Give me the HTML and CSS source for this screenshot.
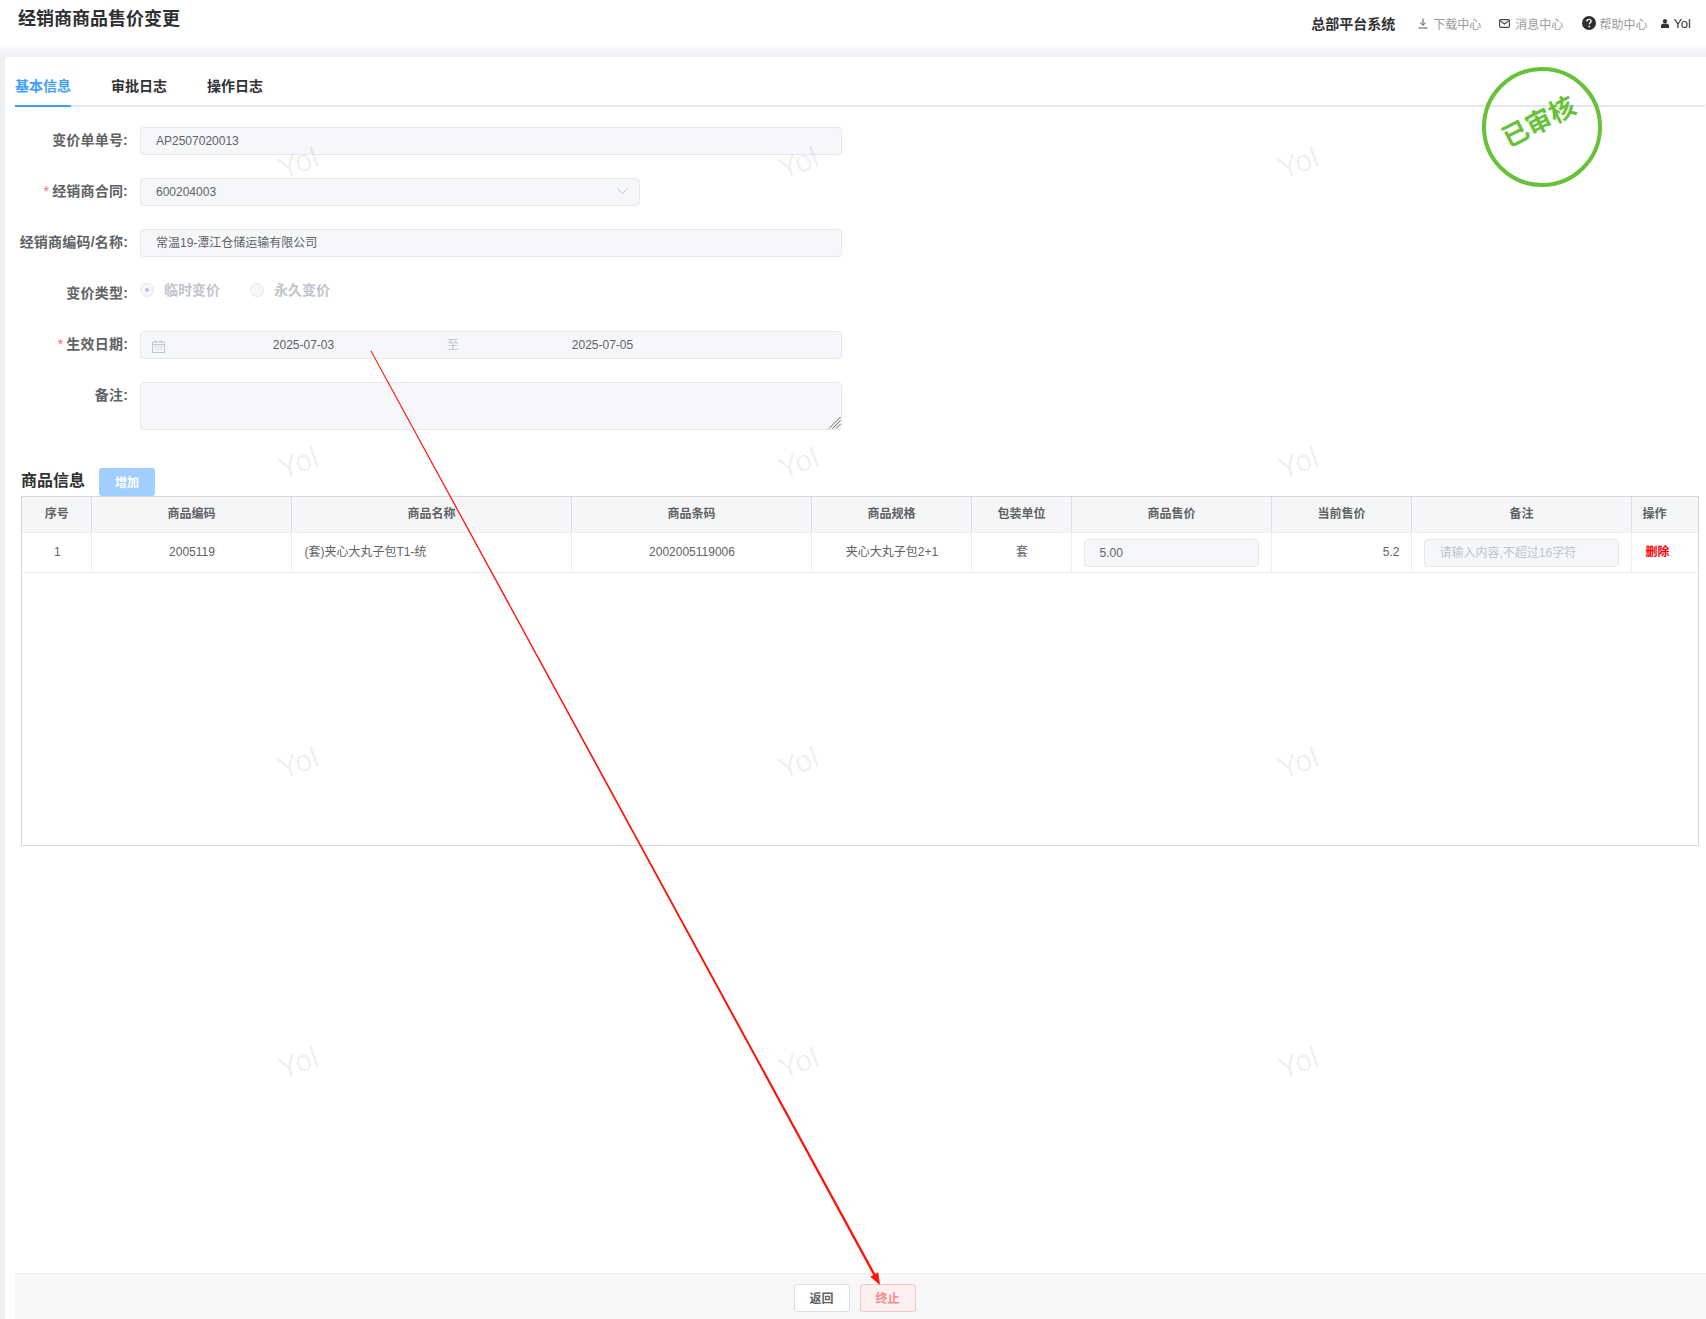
FILE: index.html
```html
<!DOCTYPE html>
<html lang="zh-CN">
<head>
<meta charset="utf-8">
<title>经销商商品售价变更</title>
<link rel="stylesheet" href="styles.css">
</head>
<body>
<div class="page">
  <header class="topbar">
    <h1 class="title">经销商商品售价变更</h1>
    <nav class="topnav">
      <span class="system">总部平台系统</span>
      <a class="navlink nav-download"><svg class="ic-download" viewBox="0 0 10 11"><path d="M5 .5v6.6M2.2 4.6 5 7.3l2.8-2.7M.5 10h9" fill="none" stroke="#555" stroke-width="1"/></svg><span>下载中心</span></a>
      <a class="navlink nav-mail"><svg class="ic-mail" viewBox="0 0 11 9"><rect x=".6" y=".6" width="9.8" height="7.8" rx="1.2" fill="none" stroke="#444" stroke-width="1.1"/><path d="M1 1.6 5.5 5 10 1.6" fill="none" stroke="#444" stroke-width="1.1"/></svg><span>消息中心</span></a>
      <a class="navlink nav-help"><svg class="ic-help" viewBox="0 0 14 14"><circle cx="7" cy="7" r="7" fill="#2f2f33"/><path d="M4.9 5.4c0-1.3 1-2 2.1-2 1.2 0 2.1.7 2.1 1.8 0 1.5-1.7 1.5-1.7 3" fill="none" stroke="#fff" stroke-width="1.4"/><circle cx="7.3" cy="10.4" r=".9" fill="#fff"/></svg><span>帮助中心</span></a>
      <a class="navlink nav-user"><svg class="ic-user" viewBox="0 0 8 9"><circle cx="4" cy="2.2" r="2.1" fill="#333"/><path d="M0 9V7c0-1.6 1.2-2.6 2.5-2.6h3C6.800 4.400 8 5.400 8 7v2z" fill="#333"/></svg><span class="user-name">Yol</span></a>
    </nav>
  </header>
  <div class="strip"></div>
  <main class="main">
    <div class="tabs">
      <span class="tab tab-active">基本信息</span>
      <span class="tab">审批日志</span>
      <span class="tab">操作日志</span>
    </div>

    <form class="form">
      <div class="row">
        <label class="label">变价单单号:</label>
        <div class="field wide">AP2507020013</div>
      </div>
      <div class="row">
        <label class="label"><i class="req">*</i>经销商合同:</label>
        <div class="field narrow select">
          <span>600204003</span>
          <svg class="chevron" viewBox="0 0 11 6"><path d="M.4.4 5.500 5.500 10.600.4" fill="none" stroke="#c0c4cc" stroke-width="1"/></svg>
        </div>
      </div>
      <div class="row">
        <label class="label">经销商编码/名称:</label>
        <div class="field wide">常温19-潭江仓储运输有限公司</div>
      </div>
      <div class="row">
        <label class="label">变价类型:</label>
        <div class="radios">
          <span class="radio radio-on"></span><span class="radio-text">临时变价</span>
          <span class="radio radio-second"></span><span class="radio-text">永久变价</span>
        </div>
      </div>
      <div class="row">
        <label class="label"><i class="req">*</i>生效日期:</label>
        <div class="field wide date">
          <svg class="ic-cal" viewBox="0 0 13 13"><path d="M.5 2h12v10.500H.5zM.5 4.600h12M3.500.4v2.600M9.500.4v2.600" fill="none" stroke="#c0c4cc" stroke-width="1"/><path d="M3 6.800h1.500M5.800 6.800h1.500M8.600 6.800h1.500M3 9.300h1.500M5.800 9.300h1.500M8.600 9.300h1.500" stroke="#c0c4cc" stroke-width="1"/></svg>
          <span class="date-val">2025-07-03</span>
          <span class="date-sep">至</span>
          <span class="date-val">2025-07-05</span>
        </div>
      </div>
      <div class="row row-last">
        <label class="label">备注:</label>
        <div class="memo-wrap">
          <textarea class="memo" disabled></textarea>
          <svg class="memo-grip" viewBox="0 0 13 13"><path d="M1 12.500 12.500 1M4.500 12.500l8-8M8 12.500l4.500-4.500" fill="none" stroke="#666" stroke-width="1"/></svg>
        </div>
      </div>
    </form>

    <section class="goods">
      <div class="goods-head">
        <h2 class="goods-title">商品信息</h2>
        <button class="btn-add" type="button">增加</button>
      </div>
      <div class="table-box">
        <table class="grid">
          <colgroup>
            <col class="c-69"><col class="c-200"><col class="c-280"><col class="c-240"><col class="c-160"><col class="c-100"><col class="c-200"><col class="c-140"><col class="c-220"><col>
          </colgroup>
          <thead>
            <tr>
              <th>序号</th><th>商品编码</th><th>商品名称</th><th>商品条码</th><th>商品规格</th><th>包装单位</th><th>商品售价</th><th>当前售价</th><th>备注</th><th class="th-op">操作</th>
            </tr>
          </thead>
          <tbody>
            <tr>
              <td>1</td>
              <td>2005119</td>
              <td class="t-left">(套)夹心大丸子包T1-统</td>
              <td>2002005119006</td>
              <td>夹心大丸子包2+1</td>
              <td>套</td>
              <td class="t-left t-field"><div class="field cell-field">5.00</div></td>
              <td class="t-right">5.2</td>
              <td class="t-left t-field"><div class="field cell-field placeholder">请输入内容,不超过16字符</div></td>
              <td class="td-op">删除</td>
            </tr>
          </tbody>
        </table>
      </div>
    </section>

    <footer class="actions">
      <button class="btn" type="button">返回</button>
      <button class="btn btn-danger" type="button">终止</button>
    </footer>

    <div class="stamp"><span class="stamp-text">已审核</span></div>
  </main>

  <div class="watermarks">
    <span>Yol</span><span>Yol</span><span>Yol</span>
    <span>Yol</span><span>Yol</span><span>Yol</span>
    <span>Yol</span><span>Yol</span><span>Yol</span>
    <span>Yol</span><span>Yol</span><span>Yol</span>
  </div>

  <svg class="arrow" viewBox="0 0 1706 1319"><polygon points="371.44,350.76 875.31,1273.93 878.21,1272.35 880,1285 870.31,1276.65 873.21,1275.07 370.56,351.24" fill="#ff1208"/></svg>
</div>
</body>
</html>
```
FILE: styles.css
```css
* { box-sizing: border-box; }
html, body { margin: 0; padding: 0; }
body {
  font-family: "Liberation Sans", "Noto Sans CJK SC", sans-serif;
  font-size: 12px;
  color: #606266;
  background: #fff;
}
.page {
  position: relative;
  width: 1706px;
  height: 1319px;
  overflow: hidden;
  display: flex;
  flex-direction: column;
}

/* top bar */
.topbar {
  height: 46px;
  flex: none;
  display: flex;
  justify-content: space-between;
  background: #fff;
}
.title {
  margin: 0;
  padding-left: 18px;
  font-size: 18px;
  line-height: 38px;
  font-weight: 600;
  color: #2f2f33;
}
.topnav {
  display: flex;
  align-items: center;
  height: 46px;
  padding: 1px 15px 0 0;
}
.system { font-size: 14px; font-weight: 700; color: #303133; margin-top: -2px; }
.navlink { display: flex; align-items: center; color: #999; }
.nav-download { margin-left: 23px; gap: 5px; }
.nav-mail { margin-left: 18px; gap: 5px; }
.nav-help { margin-left: 19px; gap: 3px; }
.nav-user { margin-left: 14px; gap: 4px; }
.ic-download { width: 10px; height: 11px; }
.ic-mail { width: 11px; height: 9px; }
.ic-help { width: 14px; height: 14px; margin-top: -2px; }
.ic-user { width: 8px; height: 9px; }
.user-name { color: #333; font-size: 13px; }

.strip {
  height: 11px;
  flex: none;
  background: linear-gradient(#f8f9fa, #eef0f4);
}

/* main panel */
.main {
  position: relative;
  flex: 1;
  display: flex;
  flex-direction: column;
  background: #fff;
  margin-left: 5px;
}
.page::before {
  content: "";
  position: absolute;
  left: 0;
  top: 57px;
  bottom: 0;
  width: 5px;
  background: #eef0f5;
}
.tabs {
  display: flex;
  gap: 40px;
  margin: 0 1px 0 10px;
  padding-top: 19px;
  border-bottom: 2px solid #e4e7ed;
  height: 50px;
}
.tab {
  height: 31px;
  font-size: 14px;
  line-height: 20px;
  font-weight: 700;
  color: #303133;
}
.tab-active { color: #409eff; border-bottom: 2px solid #409eff; }

/* form */
.form { margin: 20px 0 0 10px; }
.row { display: flex; gap: 12px; margin-bottom: 23px; }
.row-last { margin-bottom: 0; }
.label {
  width: 113px;
  flex: none;
  text-align: right;
  font-size: 14px;
  line-height: 27px;
  font-weight: 700;
  letter-spacing: 0.2px;
  color: #606266;
  white-space: nowrap;
}
.req { font-style: normal; font-weight: 400; color: #f56c6c; font-size: 14px; margin-right: 3px; }
.field {
  height: 28px;
  line-height: 26px;
  padding-left: 15px;
  background: #f5f7fa;
  border: 1px solid #e4e7ed;
  border-radius: 4px;
  color: #606266;
}
.wide { width: 702px; }
.narrow { width: 500px; }
.select { display: flex; align-items: center; justify-content: space-between; padding-right: 11px; }
.chevron { width: 11px; height: 6px; margin-top: -2px; }
.radios {
  display: flex;
  align-items: center;
  height: 20px;
  font-size: 14px;
  font-weight: 700;
  color: #c0c4cc;
  margin-bottom: 8px;
}
.radio-text { margin-top: -2px; }
.radio {
  width: 14px;
  height: 14px;
  flex: none;
  border-radius: 50%;
  background: #f5f7fa;
  border: 1px solid #e4e7ed;
  margin-right: 10px;
  display: flex;
  align-items: center;
  justify-content: center;
}
.radio-on::after {
  content: "";
  width: 4px;
  height: 4px;
  border-radius: 50%;
  background: #c0c4cc;
}
.radio-second { margin-left: 30px; }
.date { display: flex; align-items: center; padding-left: 11px; }
.ic-cal { width: 13px; height: 13px; flex: none; margin-top: 2px; }
.date-val { width: 277px; text-align: center; }
.date-sep { width: 22px; text-align: center; color: #c0c4cc; }
.memo-wrap { position: relative; width: 702px; height: 48px; }
.memo {
  display: block;
  width: 100%;
  height: 100%;
  margin: 0;
  background: #f5f7fa;
  border: 1px solid #e4e7ed;
  border-radius: 4px;
  resize: none;
  font: inherit;
}
.memo-grip {
  position: absolute;
  right: 1px;
  bottom: 1px;
  width: 13px;
  height: 13px;
}

/* goods table */
.goods { margin: 38px 7px 0 16px; }
.goods-head { display: flex; align-items: center; gap: 14px; height: 28px; }
.goods-title { margin: -2px 0 0; font-size: 16px; font-weight: 700; color: #303133; line-height: 24px; }
.btn-add {
  width: 56px;
  height: 28px;
  padding: 0 0 2px;
  border: 0;
  border-radius: 3px;
  background: #a0cfff;
  color: #fff;
  font: 700 12px "Liberation Sans", "Noto Sans CJK SC", sans-serif;
}
.table-box {
  height: 350px;
  border: 1px solid #d8d8d8;
}
.grid {
  width: 100%;
  table-layout: fixed;
  border-collapse: collapse;
}
.c-69 { width: 69px; }
.c-100 { width: 100px; }
.c-140 { width: 140px; }
.c-160 { width: 160px; }
.c-200 { width: 200px; }
.c-220 { width: 220px; }
.c-240 { width: 240px; }
.c-280 { width: 280px; }
.grid th {
  height: 35px;
  padding: 0 0 1px 1px;
  line-height: 16px;
  background: #f5f6f8;
  border-right: 1px solid #dcdfe6;
  border-bottom: 1px solid #ebeef5;
  font-weight: 700;
  color: #606266;
  text-align: center;
}
.grid th:last-child { border-right: 0; }
.grid td {
  height: 40px;
  padding: 0 11px 0 13px;
  line-height: 16px;
  border-right: 1px solid #ebeef5;
  border-bottom: 1px solid #ebeef5;
  text-align: center;
  color: #606266;
}
.grid td:last-child { border-right: 0; }
.grid td.t-left { text-align: left; }
.grid td.t-right { text-align: right; }
.grid td.t-field { padding: 1px 12px 0; }
.grid .th-op { text-align: left; padding-left: 11px; }
.grid td.td-op { text-align: left; padding-left: 14px; color: #f00; font-weight: 700; }
.cell-field { width: 100%; }
.placeholder { color: #c0c4cc; }

/* footer */
.actions {
  margin: auto 0 0 10px;
  height: 46px;
  padding: 10px 12px 0 0;
  display: flex;
  justify-content: center;
  gap: 10px;
  background: #f7f7f7;
  border-top: 1px solid #efefef;
}
.btn {
  width: 56px;
  height: 28px;
  padding: 0 0 2px;
  background: #fff;
  border: 1px solid #dcdfe6;
  border-radius: 3px;
  color: #606266;
  font: 700 12px "Liberation Sans", "Noto Sans CJK SC", sans-serif;
}
.btn-danger { background: #fef0f0; border-color: #fbc4c4; color: #f78989; }

/* overlays */
.stamp {
  position: absolute;
  left: 1477px;
  top: 10px;
  width: 120px;
  height: 120px;
  border: 4px solid #67c23a;
  border-radius: 50%;
  display: flex;
  align-items: center;
  justify-content: center;
}
.stamp-text {
  font-size: 26px;
  font-weight: 700;
  line-height: 30px;
  color: #67c23a;
  transform: translate(-3px, -5px) rotate(-27deg);
}
.watermarks {
  position: absolute;
  left: 48px;
  top: 13px;
  display: grid;
  grid-template-columns: repeat(3, 500px);
  grid-auto-rows: 300px;
  place-items: center;
  pointer-events: none;
}
.watermarks span {
  font-size: 30px;
  line-height: 34px;
  color: rgba(0, 0, 0, 0.065);
  transform: rotate(-20deg);
}
.arrow {
  position: absolute;
  left: 0;
  top: 0;
  width: 1706px;
  height: 1319px;
  pointer-events: none;
}
```
